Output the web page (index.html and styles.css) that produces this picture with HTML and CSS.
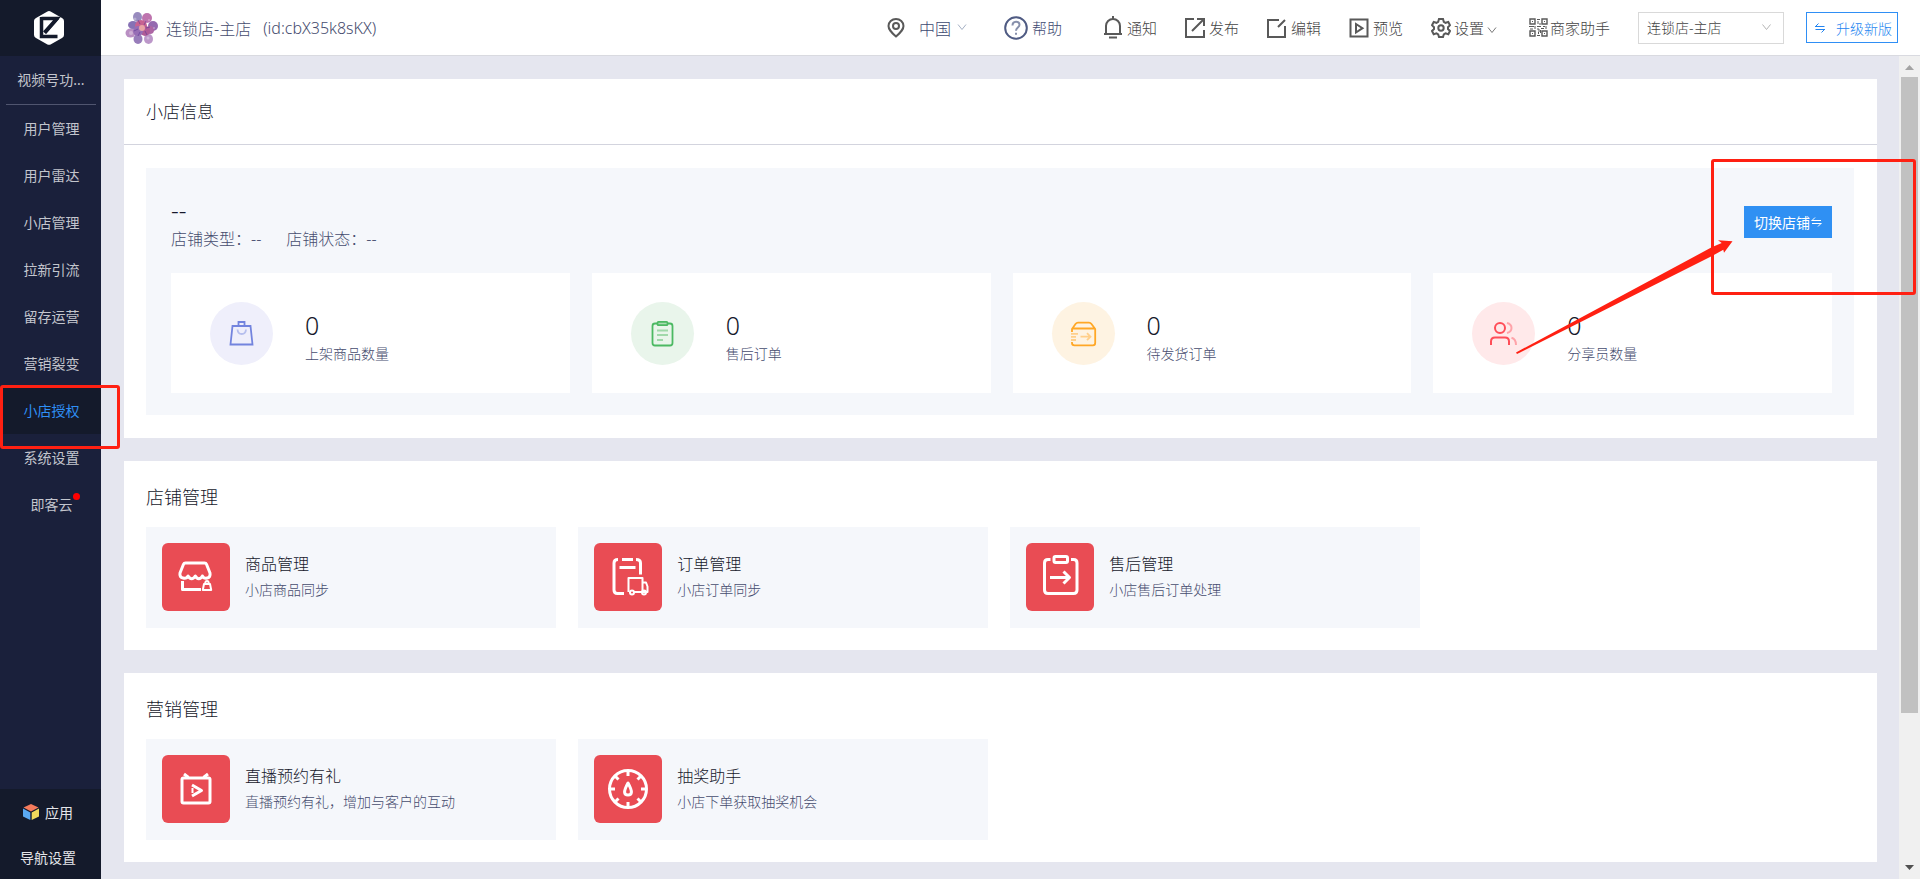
FILE: index.html
```html
<!DOCTYPE html>
<html lang="zh-CN">
<head>
<meta charset="utf-8">
<title>小店授权</title>
<link rel="stylesheet" href="styles.css">
</head>
<body>
<div class="app">
  <aside class="sidebar">
    <div class="logo">
      <svg width="32" height="36" viewBox="0 0 32 36"><path d="M16 1 Q17 1 18 1.700L29 8q2 1 2 3v14q0 2-2 3l-11 6.300q-2 1-4 0L3 28q-2-1-2-3V11q0-2 2-3l11-6.300Q15 1 16 1z" fill="#fff"/><path d="M8.500 8.500h15.500L11.500 22.500M8.500 7v19.500h16" fill="none" stroke="#141a2b" stroke-width="3.500"/><path d="M25 8L12 23" stroke="#141a2b" stroke-width="3"/></svg>
    </div>
    <div class="nav-title">视频号功...</div>
    <nav class="nav">
      <a class="nav-item" href="#">用户管理</a>
      <a class="nav-item" href="#">用户雷达</a>
      <a class="nav-item" href="#">小店管理</a>
      <a class="nav-item" href="#">拉新引流</a>
      <a class="nav-item" href="#">留存运营</a>
      <a class="nav-item" href="#">营销裂变</a>
      <a class="nav-item active" href="#">小店授权</a>
      <a class="nav-item" href="#">系统设置</a>
      <a class="nav-item" href="#"><span class="dotted">即客云</span></a>
    </nav>
    <div class="side-foot">
      <a class="foot-item" href="#"><svg width="16" height="16" viewBox="0 0 16 16"><path d="M8 0l7.500 3.500L8 7.500.5 3.500z" fill="#f47b5c"/><path d="M0 4.500l7.300 4V16L0 12.500z" fill="#5aa9f2"/><path d="M16 4.500l-7.300 4V16l7.300-3.500z" fill="#f0d95c"/></svg>应用</a>
      <a class="foot-item foot-nav" href="#">导航设置</a>
    </div>
  </aside>

  <header class="topbar">
    <svg class="avatar" width="34" height="34" viewBox="0 0 34 34">
      <g opacity=".9"><ellipse cx="12.500" cy="6" rx="4.500" ry="5" fill="#8d7fb8"/><ellipse cx="22" cy="7" rx="5" ry="5" fill="#b765a6"/><circle cx="28" cy="15" r="5" fill="#8a5aa8"/><circle cx="25" cy="19" r="4" fill="#a5569b"/><ellipse cx="23.500" cy="28" rx="4.500" ry="5" fill="#b58cc4"/><ellipse cx="13" cy="28" rx="4.500" ry="5" fill="#8d6fb3"/><ellipse cx="5.500" cy="22" rx="5" ry="4.500" fill="#b283bd"/><ellipse cx="8" cy="14" rx="5" ry="4" fill="#7a63ad"/><circle cx="16" cy="15" r="6" fill="#c25286"/><circle cx="20" cy="20" r="5" fill="#a84a8c"/><circle cx="13" cy="20" r="5" fill="#8b5fae"/><circle cx="17" cy="17" r="3" fill="#e69a9c"/></g>
      <g fill="#fff" opacity=".3"><circle cx="10" cy="8" r="1.500"/><circle cx="24" cy="9" r="1"/><circle cx="29" cy="17" r="1"/><circle cx="6" cy="22" r="2"/><circle cx="23" cy="27" r="1.500"/></g>
      <g fill="none" stroke="#5b3a94" stroke-width="1" opacity=".6"><path d="M13 9l2 4M21 10l-2 4M25 16l-4 1M22 24l-2-4M13 25l2-4M9 20l4-2"/></g>
    </svg>
    <h1 class="shop-name">连锁店-主店</h1>
    <span class="shop-id">(id:cbX35k8sKX)</span>
    <div class="tools">
      <button class="tool region"><svg width="18" height="20" viewBox="0 0 18 20" fill="none" stroke="#595959" stroke-width="2"><path d="M9 18.500C4 14 1.500 11.500 1.500 8a7.500 7 0 0 1 15 0c0 3.500-2.500 6-7.500 10.500z"/><circle cx="9" cy="8" r="3"/></svg><span>中国</span><svg width="10" height="7" viewBox="0 0 10 7" fill="none" stroke="#a4b0c4"><path d="M1 .5l4 5 4-5"/></svg></button>
      <a class="tool help" href="#"><svg width="24" height="24" viewBox="0 0 24 24" fill="none" stroke="#4f5b83" stroke-width="2"><circle cx="12" cy="12" r="10.800"/><path d="M8.500 9.500c0-5 7-5 7-.8 0 2.800-3.500 2.800-3.500 6M12 16.800v2" stroke="#8790ab"/></svg>帮助</a>
      <a class="tool notice" href="#"><svg width="20" height="23" viewBox="0 0 20 23" fill="none" stroke="#595959" stroke-width="2"><path d="M1 18h18M3 18v-8a7 7 0 0 1 14 0v8M10 0v3M6 21.500h8"/></svg>通知</a>
      <a class="tool" href="#"><svg width="20" height="20" viewBox="0 0 20 20" fill="none" stroke="#595959" stroke-width="2"><path d="M9 1H1v18h18v-7M12 1h7v7M18.500 1.500L7 13"/></svg>发布</a>
      <a class="tool" href="#"><svg width="20" height="20" viewBox="0 0 20 20" fill="none" stroke="#595959" stroke-width="2"><path d="M12 2H1v17h17V8M18 2l-7 7"/></svg>编辑</a>
      <a class="tool" href="#"><svg width="20" height="20" viewBox="0 0 20 20" fill="none" stroke="#595959" stroke-width="2"><path d="M1.500 1.500h17v17h-17z"/><path d="M7 6v8.500l6.500-4.300z"/></svg>预览</a>
      <button class="tool settings"><svg width="20" height="20" viewBox="0 0 20 20" fill="none" stroke="#595959" stroke-width="2"><path d="M8 1h4l.8 2.800 1.700 1L17.300 4l1.700 3.200-2 2v1.800l2 2-1.700 3.200-2.800-.8-1.700 1L12 19H8l-.8-2.600-1.700-1-2.800.8L1 13l2-2V9.200l-2-2L2.700 4l2.800.8 1.700-1z"/><circle cx="10" cy="10" r="2.700"/></svg><span>设置</span><svg class="chev" width="10" height="7" viewBox="0 0 10 7" fill="none" stroke="#777"><path d="M1 .5l4 5 4-5"/></svg></button>
      <a class="tool merchant" href="#"><svg width="19" height="19" viewBox="0 0 19 19" fill="none" stroke="#595959"><path d="M1 1h5v5H1zM13 1h5v5h-5zM1 13h5v5H1zM13 13h5v5h-5z" stroke-width="1.400"/><path d="M3 3.500h1M15 3.500h1M3 15.500h1M15 15.500h1M8 1.500h3M9 3v3M11 5v2M0 8.500h5M6 8v3M8 8.500h4M14 8.500h2M17 8v3M1 11h3M8 11h2v3M12 10.500h3M8 17.500h3M9.500 14v2M11.500 12v3"/></svg>商家助手</a>
      <label class="picker"><select aria-label="店铺"><option>连锁店-主店</option></select><svg width="9" height="7" viewBox="0 0 9 7" fill="none" stroke="#b4b4b4"><path d="M.5 .5l4 5 4-5"/></svg></label>
      <button class="upgrade"><svg width="10" height="10" viewBox="0 0 10 10" fill="none" stroke="currentColor"><path d="M0 3.500h9.500M.5 3.500L3.500.5M.5 6.500H10M9.500 6.500l-3 3"/></svg>升级新版</button>
    </div>
  </header>

  <main class="content">
    <section class="card">
      <h2 class="card-head">小店信息</h2>
      <div class="panel">
        <div class="panel-top">
          <div>
            <p class="store">--</p>
            <p class="meta"><span>店铺类型：--</span><span>店铺状态：--</span></p>
          </div>
          <button class="switch">切换店铺<svg width="11" height="10" viewBox="0 0 10 10" fill="none" stroke="currentColor"><path d="M0 3.500h9.500M.5 3.500L3.500.5M.5 6.500H10M9.500 6.500l-3 3"/></svg></button>
        </div>
        <div class="stats">
          <div class="stat">
            <svg class="stat-icon violet" viewBox="0 0 63 63" fill="none" stroke="#7384de" stroke-width="1.800"><path d="M22.500 24h18l2 18.500h-22z"/><path d="M28.500 24v-4h6v4"/><path d="M27.500 27.500c.5 6 8 6 8.500 0" stroke="#b6bfee"/></svg>
            <div class="stat-text"><p class="num">0</p><p class="label">上架商品数量</p></div>
          </div>
          <div class="stat">
            <svg class="stat-icon green" viewBox="0 0 63 63" fill="none" stroke="#4cb963" stroke-width="1.800"><rect x="21.500" y="21.500" width="20" height="22" rx="2.500"/><rect x="26.500" y="19.800" width="10" height="3.400" rx="1" fill="#a9dcb2"/><path d="M26 28.500h11M26 33h11M26 38h6" stroke="#a0d8aa"/></svg>
            <div class="stat-text"><p class="num">0</p><p class="label">售后订单</p></div>
          </div>
          <div class="stat">
            <svg class="stat-icon amber" viewBox="0 0 63 63" fill="none" stroke="#ffa726" stroke-width="1.800"><path d="M20 30v-3l3.500-5q1-1.300 2.500-1.300h11q1.500 0 2.500 1.300l3.700 5v14q0 2.300-2.300 2.300H22.500Q20 43.300 20 41v-1M20 26.500h23"/><path d="M19 31.800h7M19 34.800h5M19 38h5M28.500 34.700h9.500M35 31.200l3.500 3.500-3.500 3.500" stroke="#ffcf8a"/></svg>
            <div class="stat-text"><p class="num">0</p><p class="label">待发货订单</p></div>
          </div>
          <div class="stat">
            <svg class="stat-icon rose" viewBox="0 0 63 63" fill="none" stroke="#ff4d58" stroke-width="2"><circle cx="28" cy="26" r="5"/><path d="M19 43v-3.500q0-4 4-4h10q4 0 4 4V43"/><path d="M35 21c6 1.500 6 8.500 0 10M39.500 35.800c3.500 1 4.500 3.200 4.500 7.200" stroke="#ffa3a9"/></svg>
            <div class="stat-text"><p class="num">0</p><p class="label">分享员数量</p></div>
          </div>
        </div>
      </div>
    </section>

    <section class="card group">
      <h2 class="group-title">店铺管理</h2>
      <div class="features">
        <a class="feature" href="#">
          <svg class="tile" viewBox="0 0 68 68"><path d="M23.500 20h19q1.500 0 2 1.300l3.500 8.700c1 6-6 6.500-7.500 3-2 3.500-5.500 3.500-7.200 0-2 3.500-5.500 3.500-7.300 0-1.500 3.500-9 3-8-3l3.500-8.700q.5-1.300 2-1.300zM20.500 38v8.500H39"/><path class="thin" d="M42 41h6l1.200 6h-8.400zM43.200 41c0-4 3.600-4 3.600 0"/></svg>
          <div><h3>商品管理</h3><p>小店商品同步</p></div>
        </a>
        <a class="feature" href="#">
          <svg class="tile" viewBox="0 0 68 68"><path d="M24 16.500q-4 0-4 3.500v27q0 3.500 3.500 3.500H30M28 16.500h11M42 16.500q4.500 0 4.500 3.500v11.500M25.500 24.500h16"/><path class="thin" d="M34.500 49V35h14v14h-9M49 39.500h3l1.500 4V49H49"/><circle class="thin" cx="38" cy="49.500" r="2"/><circle class="thin" cx="50" cy="49.500" r="2"/></svg>
          <div><h3>订单管理</h3><p>小店订单同步</p></div>
        </a>
        <a class="feature" href="#">
          <svg class="tile" viewBox="0 0 68 68"><path d="M24.500 16.500H22q-3.500 0-3.500 3.500v27q0 3.500 3.500 3.500h25.500q3.500 0 3.500-3.500V20q0-3.500-3.500-3.500H45M24 34.500h19M37.500 28.500l6 6-6 6"/><rect x="28" y="13.500" width="13.500" height="6" rx="1.500"/></svg>
          <div><h3>售后管理</h3><p>小店售后订单处理</p></div>
        </a>
      </div>
    </section>

    <section class="card group">
      <h2 class="group-title">营销管理</h2>
      <div class="features">
        <a class="feature" href="#">
          <svg class="tile" viewBox="0 0 68 68"><rect x="20" y="23" width="28" height="25" rx="1.500"/><path d="M22 19l4.500 3.500M46 19l-4.500 3.500M30 30l9.500 5.500L30 41"/><path class="thin" d="M30.500 33v5"/></svg>
          <div><h3>直播预约有礼</h3><p>直播预约有礼，增加与客户的互动</p></div>
        </a>
        <a class="feature" href="#">
          <svg class="tile" viewBox="0 0 68 68"><circle cx="34" cy="34" r="18.500"/><path d="M34 16v5M34 47v5M16 34h5M47 34h5M21.500 21.500l3 3M43.500 43.500l3 3M46.500 21.500l-3 3M21.500 46.500l3-3"/><path d="M34 28c-5 9-4 12 0 12s5-3 0-12z"/></svg>
          <div><h3>抽奖助手</h3><p>小店下单获取抽奖机会</p></div>
        </a>
      </div>
    </section>
  </main>

  <div class="scrollbar">
    <svg width="9" height="5" viewBox="0 0 9 5"><path d="M0 5l4.500-5L9 5z" fill="#a3a3a3"/></svg>
    <div class="thumb"></div>
    <svg width="9" height="5" viewBox="0 0 9 5"><path d="M0 0l4.500 5L9 0z" fill="#505050"/></svg>
  </div>

  <div class="mark mark-nav"></div>
  <div class="mark mark-switch"></div>
  <svg class="arrow" width="218" height="115" viewBox="0 0 218 115"><path d="M0 112.500L195.700 7.300l10-4.300-3.700-2.700 14.500 1-8.500 11.500-.7-3L196.500 15.700 1 114z" fill="#ff2012"/></svg>
</div>
</body>
</html>
```
FILE: styles.css
```css
* { box-sizing: border-box; }

body {
  margin: 0;
  font-family: "Noto Sans", "Noto Sans CJK SC", sans-serif;
  font-size: 14px;
  font-weight: 300;
  color: #464c6e;
}

h1, h2, h3, p { margin: 0; font-weight: inherit; }
a { color: inherit; text-decoration: none; }
button, select { font: inherit; color: inherit; background: none; border: 0; padding: 0; }
svg { flex: none; }

.app {
  position: relative;
  display: grid;
  grid-template-columns: 101px 1fr 21px;
  grid-template-rows: 56px 1fr;
  height: 100vh;
  overflow: hidden;
  background: #e5e6ef;
}

/* Sidebar */
.sidebar {
  grid-row: 1 / 3;
  display: flex;
  flex-direction: column;
  background: #1a203b;
  color: #c3c5cd;
  font-weight: 400;
}
.logo {
  display: flex;
  align-items: center;
  justify-content: center;
  height: 56px;
  padding-right: 3px;
  background: #141a2b;
}
.nav-title {
  margin: 0 5px 0 6px;
  height: 49px;
  line-height: 48px;
  text-align: center;
  border-bottom: 1px solid #50556f;
}
.nav { display: flex; flex-direction: column; flex: 1; }
.nav-item { padding-left: 2px; line-height: 47px; text-align: center; }
.nav-item.active { background: #141a2b; color: #2f8ff5; }
.dotted { position: relative; }
.dotted::after {
  content: "";
  position: absolute;
  right: -7px;
  top: -2px;
  width: 7px;
  height: 7px;
  border-radius: 50%;
  background: #f00;
}
.side-foot {
  height: 90px;
  background: #141a2b;
  color: #e4e5e9;
}
.foot-item {
  display: flex;
  align-items: center;
  justify-content: center;
  gap: 6px;
  height: 45px;
  padding-right: 5px;
}

/* Top bar */
.topbar {
  grid-column: 2 / 4;
  display: flex;
  align-items: center;
  padding: 0 22px 0 24px;
  background: #fff;
  border-bottom: 1px solid #d9dae0;
}
.shop-name { margin-left: 7px; font-size: 16px; }
.shop-id { margin-left: 12px; font-size: 16px; }
.tools {
  display: flex;
  align-items: center;
  gap: 28px;
  margin-left: auto;
  font-size: 15px;
  color: #444;
}
.tool { display: flex; align-items: center; gap: 4px; }
.region { gap: 6px; font-size: 16px; color: #3c4870; }
.region span { margin-left: 8px; }
.help { margin-left: 9px; color: #3c4870; }
.notice { margin-left: 13px; }
.settings { gap: 3px; }
.merchant { margin-left: 4px; gap: 2px; }
.chev { margin-top: 6px; }
.picker {
  display: flex;
  align-items: center;
  width: 146px;
  height: 32px;
  padding: 0 12px 0 8px;
  border: 1px solid #d9d9d9;
  font-size: 14px;
}
.picker select { flex: 1; min-width: 0; appearance: none; outline: 0; }
.upgrade {
  display: flex;
  align-items: center;
  gap: 11px;
  height: 31px;
  margin-left: -6px;
  padding: 0 5px 0 8px;
  border: 1px solid #2f8ff5;
  color: #2384f0;
  font-size: 14px;
}

/* Content */
.content {
  display: flex;
  flex-direction: column;
  gap: 23px;
  padding: 23px 22px 0 23px;
}
.card { background: #fff; }
.card-head {
  height: 66px;
  line-height: 65px;
  padding-left: 22px;
  border-bottom: 1px solid #d3d4de;
  font-size: 17px;
  color: #15182b;
}
.card > .panel { margin: 23px 23px 23px 22px; }
.panel { padding: 31px 22px 22px 25px; background: #f5f7fb; }
.panel-top {
  display: flex;
  justify-content: space-between;
  align-items: flex-start;
  height: 74px;
}
.store { line-height: 22px; font-size: 24px; color: #15182b; }
.meta { display: flex; gap: 25px; line-height: 36px; font-size: 16px; }
.switch {
  display: flex;
  align-items: center;
  gap: 1px;
  height: 32px;
  margin-top: 7px;
  padding: 0 10px;
  background: #2f90f3;
  color: #fff;
  font-weight: 400;
}
.stats { display: grid; grid-template-columns: repeat(4, 1fr); gap: 22px; }
.stat {
  display: flex;
  align-items: center;
  gap: 32px;
  height: 120px;
  padding-left: 39px;
  background: #fff;
}
.stat-icon { width: 63px; height: 63px; border-radius: 50%; }
.stat-text { padding-top: 9px; }
.violet { background: #efeffb; }
.green { background: #e9f5eb; }
.amber { background: #fef3e2; }
.rose { background: #ffe9ea; }
.num { line-height: 32px; font-size: 25px; color: #15182b; }
.label { line-height: 26px; }

.group { padding: 22px; }
.group-title {
  height: 44px;
  line-height: 28px;
  font-size: 18px;
  color: #15182b;
}
.features { display: grid; grid-template-columns: repeat(3, 24%); gap: 22px; }
.feature {
  display: flex;
  align-items: center;
  gap: 15px;
  height: 101px;
  padding: 0 0 1px 16px;
  background: #f5f7fb;
}
.feature h3 { line-height: 26px; font-size: 16px; color: #15182b; }
.feature p { line-height: 26px; }
.tile {
  width: 68px;
  height: 68px;
  border-radius: 6px;
  background: #e94c54;
  fill: none;
  stroke: #fff;
  stroke-width: 3;
  stroke-linejoin: round;
}
.tile .thin { stroke-width: 2; }

/* Scroll track */
.scrollbar {
  display: flex;
  flex-direction: column;
  align-items: center;
  padding: 9px 2px;
  background: #f0f0f0;
}
.thumb { width: 17px; height: 79%; margin: 7px 0 auto; background: #c1c1c1; }

/* Callouts over the page */
.mark { position: absolute; border: 3px solid #ff2012; border-radius: 3px; }
.mark-nav { left: 0; top: 385px; width: 120px; height: 64px; }
.mark-switch { right: 4px; top: 159px; width: 205px; height: 136px; }
.arrow { position: absolute; right: 186px; top: 240px; }
```
